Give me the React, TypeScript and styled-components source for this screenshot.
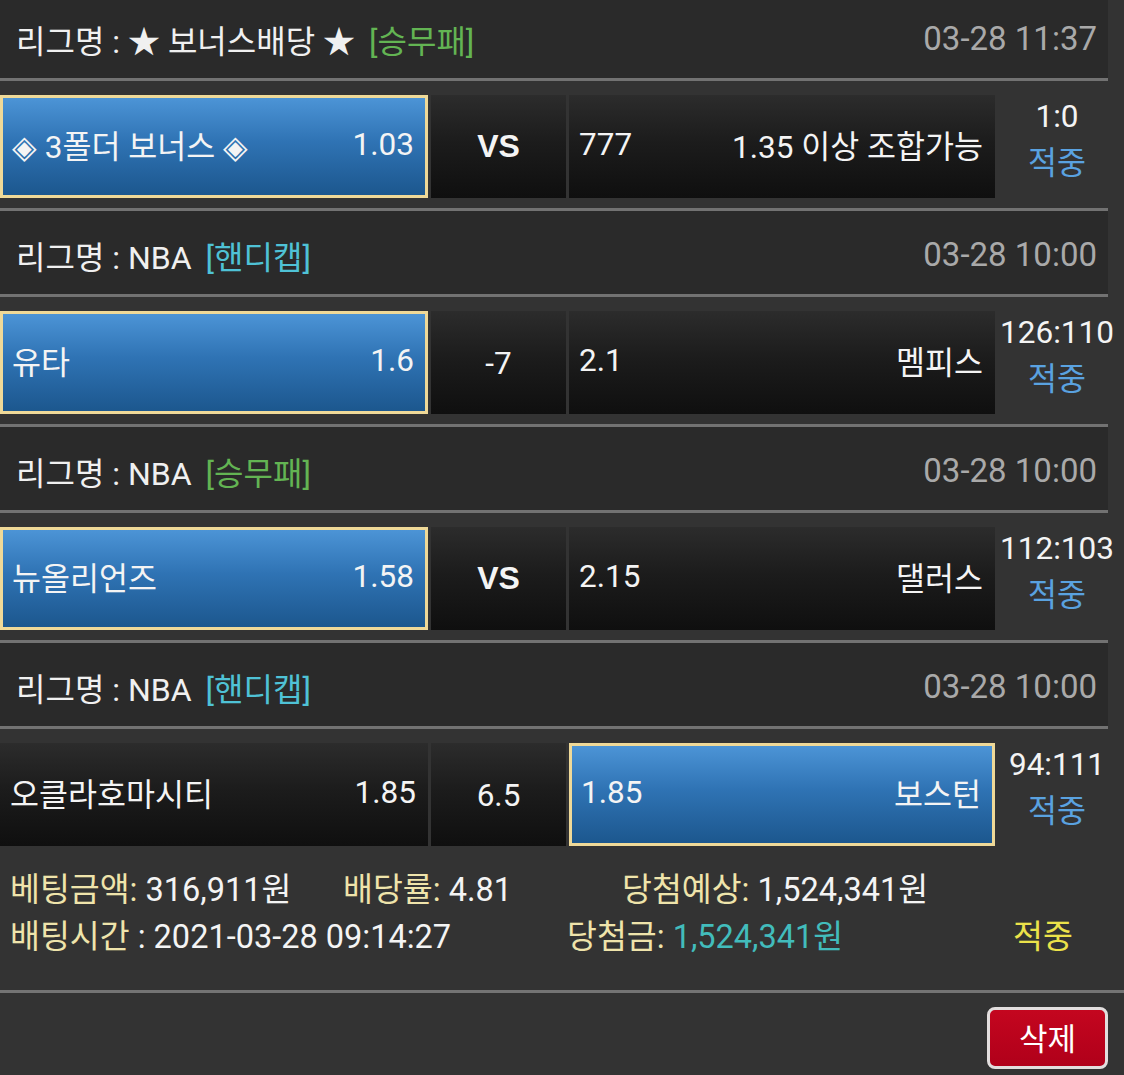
import React from "react";
import styled, { createGlobalStyle } from "styled-components";

const Global = createGlobalStyle`
  html, body { margin: 0; padding: 0; background: #333333; }
  body { font-family: Roboto, "Noto Sans CJK KR", sans-serif; color: #f2f2f2; overflow: hidden; }
`;

const Page = styled.div`
  width: 1124px;
  margin-top: -8px;
  background: #333333;
`;

const Section = styled.section`
  display: flex;
  flex-direction: column;
`;

const Header = styled.div`
  width: 1108px;
  box-sizing: border-box;
  height: 89px;
  border-top: 3px solid #727272;
  border-bottom: 3px solid #727272;
  background: #2a2a2a;
  display: flex;
  align-items: center;
  justify-content: space-between;
  padding: 4px 11px 0 16px;
  font-size: 32px;
`;

const League = styled.div`
  color: #f0f0f0;
  white-space: nowrap;
`;

const Tag = styled.span<{ $kind: "wdl" | "handi" }>`
  margin-left: 14px;
  color: ${(p) => (p.$kind === "wdl" ? "#63b453" : "#4fc2d6")};
`;

const DateText = styled.div`
  color: #a9a9a9;
  font-size: 33px;
`;

const MatchRow = styled.div`
  display: flex;
  align-items: flex-start;
  padding: 14px 0 10px 0;
  gap: 3px;
`;

const Cell = styled.div<{ $selected?: boolean; $w: number }>`
  box-sizing: border-box;
  width: ${(p) => p.$w}px;
  height: 103px;
  display: flex;
  align-items: center;
  justify-content: space-between;
  font-size: 31.5px;
  color: #f4f4f4;
  padding-bottom: 5px;
  white-space: nowrap;
  background: ${(p) =>
    p.$selected
      ? "linear-gradient(180deg, #4c94d6 0%, #2f73b4 45%, #1c578e 100%)"
      : "linear-gradient(180deg, #2c2c2c 0%, #1c1c1c 45%, #0f0f0f 100%)"};
  border: ${(p) => (p.$selected ? "3px solid #efd998" : "none")};
  padding-left: ${(p) => (p.$selected ? 9 : 10)}px;
  padding-right: ${(p) => (p.$selected ? 11 : 12)}px;
`;

const Mid = styled.div<{ $bold?: boolean }>`
  box-sizing: border-box;
  width: 135px;
  height: 103px;
  display: flex;
  align-items: center;
  justify-content: center;
  padding-top: ${(p) => (p.$bold ? 0 : 2)}px;
  font-size: ${(p) => (p.$bold ? 32 : 31.5)}px;
  font-weight: ${(p) => (p.$bold ? 700 : 400)};
  font-family: ${(p) => (p.$bold ? '"Liberation Sans", Arial, sans-serif' : 'Roboto, "Noto Sans CJK KR", sans-serif')};
  color: #f4f4f4;
  background: linear-gradient(180deg, #2c2c2c 0%, #1c1c1c 45%, #0f0f0f 100%);
`;

const ScoreCol = styled.div`
  flex: 1;
  display: flex;
  flex-direction: column;
  align-items: center;
  margin-top: -2px;
  padding-right: 8px;
  font-size: 31.5px;
  line-height: 47px;
  color: #f4f4f4;
`;

const Hit = styled.div`
  color: #5aa2e0;
`;

const Info = styled.div`
  padding: 11px 0 29px 10px;
  border-bottom: 3px solid #747474;
  font-size: 32.5px;
  line-height: 47px;
`;

const InfoLine = styled.div<{ $cols: string }>`
  display: grid;
  grid-template-columns: ${(p) => p.$cols};
  white-space: nowrap;
`;

const Label = styled.span`
  color: #efe4ab;
`;

const Value = styled.span<{ $tone?: "teal" }>`
  color: ${(p) => (p.$tone === "teal" ? "#42bcbc" : "#f4f4f4")};
`;

const Result = styled.span`
  color: #ece24a;
`;

const Footer = styled.div`
  display: flex;
  justify-content: flex-end;
  padding: 14px 16px 0 0;
`;

const DeleteButton = styled.button`
  width: 121px;
  height: 62px;
  box-sizing: border-box;
  border: 3px solid #e2dede;
  border-radius: 8px;
  background: linear-gradient(180deg, #c4061f 0%, #b0001a 100%);
  color: #ffffff;
  font-family: Roboto, "Noto Sans CJK KR", sans-serif;
  font-size: 31px;
  padding: 0 0 3px 0;
`;

type Match = {
  league: string;
  kind: "wdl" | "handi";
  date: string;
  home: string;
  homeOdds: string;
  mid: string;
  away: string;
  awayOdds: string;
  pick: "home" | "away";
  score: string;
};

const matches: Match[] = [
  {
    league: "리그명 : ★ 보너스배당 ★",
    kind: "wdl",
    date: "03-28 11:37",
    home: "◈ 3폴더 보너스 ◈",
    homeOdds: "1.03",
    mid: "VS",
    away: "1.35 이상 조합가능",
    awayOdds: "777",
    pick: "home",
    score: "1:0",
  },
  {
    league: "리그명 : NBA",
    kind: "handi",
    date: "03-28 10:00",
    home: "유타",
    homeOdds: "1.6",
    mid: "-7",
    away: "멤피스",
    awayOdds: "2.1",
    pick: "home",
    score: "126:110",
  },
  {
    league: "리그명 : NBA",
    kind: "wdl",
    date: "03-28 10:00",
    home: "뉴올리언즈",
    homeOdds: "1.58",
    mid: "VS",
    away: "댈러스",
    awayOdds: "2.15",
    pick: "home",
    score: "112:103",
  },
  {
    league: "리그명 : NBA",
    kind: "handi",
    date: "03-28 10:00",
    home: "오클라호마시티",
    homeOdds: "1.85",
    mid: "6.5",
    away: "보스턴",
    awayOdds: "1.85",
    pick: "away",
    score: "94:111",
  },
];

export default function App() {
  return (
    <Page>
      <Global />
      {matches.map((m, i) => (
        <Section key={i}>
          <Header>
            <League>
              {m.league}
              <Tag $kind={m.kind}>{m.kind === "wdl" ? "[승무패]" : "[핸디캡]"}</Tag>
            </League>
            <DateText>{m.date}</DateText>
          </Header>
          <MatchRow>
            <Cell $w={428} $selected={m.pick === "home"}>
              <span>{m.home}</span>
              <span>{m.homeOdds}</span>
            </Cell>
            <Mid $bold={m.mid === "VS"}>{m.mid}</Mid>
            <Cell $w={426} $selected={m.pick === "away"}>
              <span>{m.awayOdds}</span>
              <span>{m.away}</span>
            </Cell>
            <ScoreCol>
              <div>{m.score}</div>
              <Hit>적중</Hit>
            </ScoreCol>
          </MatchRow>
        </Section>
      ))}
      <Info>
        <InfoLine $cols="333px 279px auto">
          <span>
            <Label>베팅금액:</Label> <Value>316,911원</Value>
          </span>
          <span>
            <Label>배당률:</Label> <Value>4.81</Value>
          </span>
          <span>
            <Label>당첨예상:</Label> <Value>1,524,341원</Value>
          </span>
        </InfoLine>
        <InfoLine $cols="557px 446px auto">
          <span>
            <Label>배팅시간</Label> <Value>: 2021-03-28 09:14:27</Value>
          </span>
          <span>
            <Label>당첨금:</Label> <Value $tone="teal">1,524,341원</Value>
          </span>
          <Result>적중</Result>
        </InfoLine>
      </Info>
      <Footer>
        <DeleteButton>삭제</DeleteButton>
      </Footer>
    </Page>
  );
}
